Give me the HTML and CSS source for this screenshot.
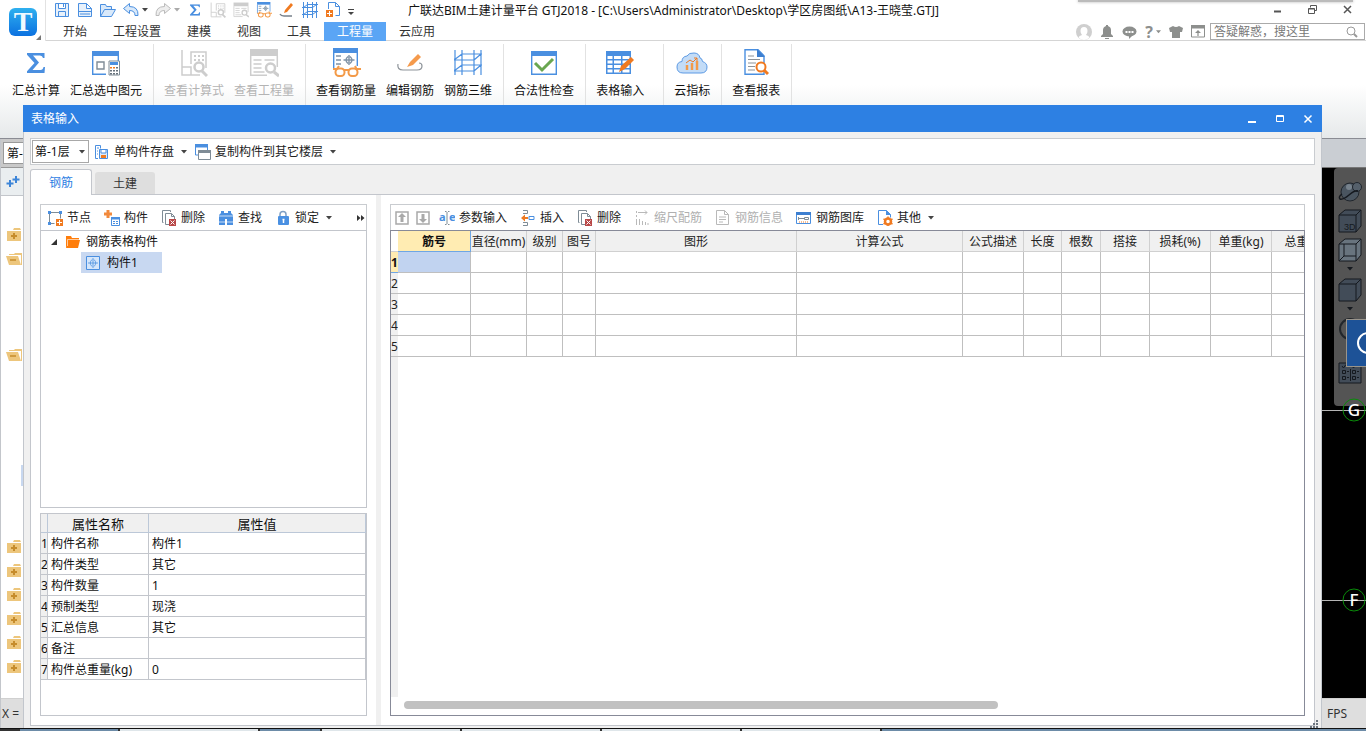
FILE: index.html
```html
<!DOCTYPE html>
<html lang="zh-CN">
<head>
<meta charset="utf-8">
<title>广联达BIM土建计量平台 GTJ2018</title>
<link rel="stylesheet" href="styles.css">
</head>
<body>
<svg class="defs" aria-hidden="true">
  <symbol id="caret" viewBox="0 0 6 4"><path d="M0 0h6L3 3.5z" fill="currentColor"/></symbol>
  <symbol id="sigma" viewBox="0 0 18 20"><path d="M0 0h17.500v5h-1.500q-.5-2.500-3-2.500H6l6 7-6.500 7.500H13.500q2.500 0 3-3H18l-.5 6H0v-1.800L7.500 10 0 1.800z" fill="#4a8fe0"/></symbol>
  <symbol id="calcexpr" viewBox="0 0 28 28"><g fill="none" stroke="#cdcdcd" stroke-width="1.500"><path d="M2 1v25h9V18H2M11 26h9M11 15V3h15v16"/><circle cx="19" cy="18" r="4.500" stroke-width="2.500"/><path d="M22 22l5 5" stroke-width="3"/></g><path d="M14 6h2v2h-2zM18 6h2v2h-2zM22 6h2v2h-2zM14 10h2v2h-2zM18 10h2v2h-2zM22 10h2v2h-2z" fill="#cdcdcd"/></symbol>
  <symbol id="calcqty" viewBox="0 0 30 28"><path d="M1 0h28v7H1z" fill="#cdcdcd"/><path d="M1.700 7v19.300H18M28.300 7v11M4.500 11h8M15.500 11h10M4.500 15h8M4.500 19h8M4.500 23h11" fill="none" stroke="#cdcdcd" stroke-width="1.500"/><circle cx="21.500" cy="19" r="4.500" fill="#fff" stroke="#cdcdcd" stroke-width="2.500"/><path d="M25 23l5 4" stroke="#cdcdcd" stroke-width="3"/></symbol>
  <symbol id="rebarqty" viewBox="0 0 30 30"><path d="M2 0h25v5H2z" fill="#4a8fe0"/><path d="M2.700 5v16M26.300 5v13" stroke="#4a8fe0" stroke-width="1.400"/><g fill="none" stroke="#8093a6" stroke-width="1.400"><path d="M5 8h5M5 12h5M5 16h5M18 7v10M12.500 12h11M17 8.500q-4 3.500 0 7M19 8.500q4 3.500 0 7"/></g><g fill="none" stroke="#f39a48" stroke-width="2"><rect x="4.500" y="20.500" width="9" height="7.500" rx="3.500"/><rect x="17.500" y="20.500" width="9" height="7.500" rx="3.500"/><path d="M13 22h5M5 22l3-4M26 22l-2-4M2 21h3M26 21h4"/></g></symbol>
  <symbol id="pencil" viewBox="0 0 26 26"><path d="M21 4l3 3-8 8-6 2 3-5z" fill="#f59a4c"/><path d="M1 14q-1 6 5 6h14q5 0 5-4 0-3-3-3" fill="none" stroke="#8d9399" stroke-width="1.200"/></symbol>
  <symbol id="rebar3d" viewBox="0 0 28 26"><g fill="none" stroke="#4a8fe0" stroke-width="1.200"><path d="M1 0v25M8 0v25M20 0v25M27 0v25M0 10h20M0 21h20M8 4h20M8 15h20M0 10l8-6M20 10l7-6M0 21l8-6M20 21l7-6"/></g></symbol>
  <symbol id="save" viewBox="0 0 16 16"><path d="M1.500 1.500h13v13h-13z M4.500 1.500v5h7v-5 M4.500 14.500V9.500h7v5M9.500 2v3" fill="#e8f1fb" stroke="#4a8fe0"/></symbol>
  <symbol id="delete" viewBox="0 0 16 16"><path d="M2.500 12.500h-1V.5h8v1.500M4.500 3.500h6l3 3v8h-9z" fill="#fff" stroke="#7f8c96"/><path d="M10.500 3.500v3h3" fill="none" stroke="#7f8c96"/><path d="M8 9h7v7H8z" fill="#b94848"/><path d="M9.500 10.500l4 4m0-4l-4 4" stroke="#fff"/></symbol>
  <symbol id="fplus" viewBox="0 0 16 14"><path d="M1 3h14v10H1zM8 0h6l1 2H7z" fill="#edc67c"/><path d="M8 5v6M5 8h6" stroke="#c68c2c" stroke-width="2"/></symbol>
  <symbol id="fopen" viewBox="0 0 16 14"><path d="M3 3V2h5l1-1h7v12h-1V3z" fill="#edc67c"/><path d="M0 4h12l3 9H3z" fill="#edc67c"/><path d="M4 8h6" stroke="#c68c2c" stroke-width="1.500"/></symbol>
  <symbol id="cube" viewBox="0 0 24 24"><path d="M1 6l6-5h16v16l-5 6H1z" fill="#424c58" stroke="#15191f"/><path d="M1 6h17v17M18 6l5-5" fill="none" stroke="#15191f"/></symbol>
</svg>

<div class="app">
  <header class="top">
    <div class="logo">
      <svg width="28" height="28" viewBox="0 0 28 28"><defs><linearGradient id="lg" x1="0" y1="0" x2="0" y2="1"><stop offset="0" stop-color="#2fb0ef"/><stop offset="1" stop-color="#0b71e0"/></linearGradient></defs><rect width="28" height="28" rx="6" fill="url(#lg)"/><text x="14" y="23" class="logo-t">T</text></svg>
      <svg class="logo-corner" width="5" height="5"><path d="M5 0v5H0z" fill="#777"/></svg>
    </div>
    <div class="top-main">
      <div class="titlebar">
        <div class="quick">
          <svg width="16" height="16"><use href="#save"/></svg>
          <svg width="16" height="16" viewBox="0 0 16 16"><path d="M1.500 14.500v-13h8l5 5v8zM9.500 1.500v5h5" fill="#e8f1fb" stroke="#4a8fe0"/><path d="M1 9.500h14M3 12h10" stroke="#4a8fe0"/></svg>
          <svg width="16" height="16" viewBox="0 0 16 16"><path d="M.5 14.500v-12h5l1 2h5v3M.5 14.500l4-7h11l-4 7z" fill="#d9e9fa" stroke="#4a8fe0"/></svg>
          <span class="pair"><svg width="16" height="16" viewBox="0 0 16 16"><path d="M.5 6.500l6-5v3q9 0 8.500 9h-3q0-5-5.500-5v3z" fill="#d9e9fa" stroke="#4a8fe0"/></svg><svg class="car" width="6" height="4"><use href="#caret"/></svg></span>
          <span class="pair off"><svg width="16" height="16" viewBox="0 0 16 16"><path d="M15.500 6.500l-6-5v3q-9 0-8.500 9h3q0-5 5.500-5v3z" fill="#eee" stroke="#bbb"/></svg><svg class="car" width="6" height="4"><use href="#caret"/></svg></span>
          <svg width="16" height="16" viewBox="-4 -4 26 28"><use href="#sigma" width="18" height="20"/></svg>
          <svg width="16" height="16"><use href="#calcexpr"/></svg>
          <svg width="16" height="16"><use href="#calcqty"/></svg>
          <svg width="16" height="16"><use href="#rebarqty"/></svg>
          <svg width="16" height="16" viewBox="0 0 16 16"><path d="M12 1l2 2-6 7-3 1 1-3z" fill="#f07a20"/><path d="M1 12q1 2 4 2h8" fill="none" stroke="#77808a" stroke-width="1.500"/></svg>
          <svg width="16" height="16" viewBox="0 0 16 16"><path d="M1.500 0v16M5.500 0v16M10.500 0v16M14.500 0v16M0 5.500h11M0 12.500h11M5 2.500h11M5 9.500h11M1.500 5.500l4-3M10.500 5.500l4-3M1.500 12.500l4-3M10.500 12.500l4-3" fill="none" stroke="#4a8fe0"/></svg>
          <svg width="16" height="16" viewBox="0 0 16 16"><path d="M3.500 7V.5h7l4 4v9h-4M10.500.5v4h4" fill="none" stroke="#4a8fe0"/><path d="M1 8h7v7H1z" fill="#f07a20"/><path d="M4.500 9v5M2 11.500h5" stroke="#fff"/></svg>
          <svg width="6" height="16" viewBox="0 0 6 16"><path d="M0 7.500h6" stroke="#444"/><path d="M0 10h6l-3 3z" fill="#444"/></svg>
        </div>
        <div class="title">广联达BIM土建计量平台 GTJ2018 - [C:\Users\Administrator\Desktop\学区房图纸\A13-王晓莹.GTJ]</div>
        <div class="winbtns">
          <button aria-label="最小化"><svg width="9" height="9"><path d="M1 6.500h7" stroke="#555" stroke-width="2"/></svg></button>
          <button aria-label="还原"><svg width="9" height="9"><path d="M2.500 2.500v-2h6v5h-2M.5 3.500h6v5h-6zM.5 4h6" fill="none" stroke="#555"/></svg></button>
          <button aria-label="关闭"><svg width="9" height="9"><path d="M1 1l7 7M8 1l-7 7" stroke="#555" stroke-width="1.500"/></svg></button>
        </div>
      </div>
      <div class="tabrow">
        <nav class="tabs">
          <a href="#">开始</a><a href="#">工程设置</a><a href="#">建模</a><a href="#">视图</a><a href="#">工具</a><a href="#" class="on">工程量</a><a href="#">云应用</a>
        </nav>
        <div class="help">
          <svg width="16" height="16" viewBox="0 0 16 16"><circle cx="8" cy="8" r="8" fill="#cfcfcf"/><path d="M8 3q3.500 0 3.500 4 0 2.500-1.500 4 3 .5 3.500 2.500Q11 16 8 16t-5.500-2.500Q3 11.500 6 11 4.500 9.500 4.500 7 4.500 3 8 3z" fill="#fff"/></svg>
          <svg width="14" height="16" viewBox="0 0 14 16"><path d="M6 1h2v1q3 1 3 4v4l2 2v1H1v-1l2-2V6q0-3 3-4zM5 14h4v1H5z" fill="#8d8f8d"/></svg>
          <svg width="15" height="14" viewBox="0 0 15 14"><ellipse cx="7.500" cy="6.500" rx="7" ry="5" fill="#8d8f8d"/><path d="M7 11v3l4-4z" fill="#8d8f8d"/><path d="M3.500 6h2v2h-2zM6.500 6h2v2h-2zM9.500 6h2v2h-2z" fill="#fff"/></svg>
          <span class="q">?<svg width="5" height="4"><use href="#caret"/></svg></span>
          <svg width="14" height="14" viewBox="0 0 14 14"><path d="M4 1q3 2 6 0l4 2-1 4h-2v6H3V7H1L0 3z" fill="#8d8f8d"/></svg>
          <svg width="14" height="13" viewBox="0 0 14 13"><path d="M.5 1h13v11H.5z" fill="#fff" stroke="#8d8f8d"/><path d="M0 0h14v3.500H0zM7 5l3 3H7.600v3H6.400V8H4z" fill="#8d8f8d"/></svg>
          <label class="search"><input type="text" placeholder="答疑解惑，搜这里" aria-label="搜索"><svg width="12" height="12"><circle cx="5" cy="5" r="4" fill="none" stroke="#999"/><path d="M8 8l3 3" stroke="#999" stroke-width="2"/></svg></label>
        </div>
      </div>
    </div>
    <div class="topshadow"></div>
  </header>

  <div class="ribbon">
    <div class="group first">
      <button><svg width="28" height="30" viewBox="-5 -5 28 30"><use href="#sigma" width="18" height="20"/></svg>汇总计算</button>
      <button><svg width="28" height="30" viewBox="0 0 28 30"><path d="M0 3h27v5H0z" fill="#4a8fe0"/><path d="M.7 8v18.300H14M26.300 8v5" fill="none" stroke="#4a8fe0" stroke-width="1.400"/><path d="M5 14h7v7H5z" fill="none" stroke="#7f8c96" stroke-width="1.400"/><path d="M17 13h10.500v14H17z" fill="#fff" stroke="#7f8c96"/><path d="M18 14h8v3h-8z" fill="#4a8fe0"/><path d="M18 19h2v1.500h-2zM21 19h2v1.500h-2z" fill="#f07a20"/><path d="M24 19h2v1.500h-2zM18 22h2v1.500h-2zM21 22h2v1.500h-2zM24 22h2v1.500h-2zM18 25h2v1.500h-2zM21 25h2v1.500h-2zM24 25h2v1.500h-2z" fill="#66717b"/></svg>汇总选中图元</button>
    </div>
    <div class="group">
      <button disabled><svg width="28" height="30"><use href="#calcexpr"/></svg>查看计算式</button>
      <button disabled><svg width="30" height="30"><use href="#calcqty"/></svg>查看工程量</button>
    </div>
    <div class="group">
      <button><svg width="30" height="30"><use href="#rebarqty"/></svg>查看钢筋量</button>
      <button><svg width="26" height="30"><use href="#pencil"/></svg>编辑钢筋</button>
      <button><svg width="28" height="30"><use href="#rebar3d"/></svg>钢筋三维</button>
    </div>
    <div class="group">
      <button><svg width="26" height="30" viewBox="0 0 26 30"><path d="M.7 4.700h24.600v21.600H.7z" fill="#fff" stroke="#4a8fe0" stroke-width="1.400"/><path d="M0 3h26v5H0z" fill="#4a8fe0"/><path d="M4 15l7 7 11-11" fill="none" stroke="#69a650" stroke-width="3"/></svg>合法性检查</button>
    </div>
    <div class="group wide">
      <button><svg width="28" height="30" viewBox="0 0 28 30"><path d="M0 3h25v23H0z" fill="#4a8fe0"/><path d="M1.500 8h5v3h-5zM8 8h7v3H8zM16.500 8h7v3h-7zM1.500 12.500h5v3h-5zM8 12.500h7v3H8zM16.500 12.500h7v3h-7zM1.500 17h5v3h-5zM8 17h7v3H8zM16.500 17h7v3h-7zM1.500 21.500h5v3h-5zM8 21.500h7v3H8zM16.500 21.500h7v3h-7z" fill="#fff"/><path d="M25 9l3 3-9 9-6 3 2-6z" fill="#f07a20"/></svg>表格输入</button>
    </div>
    <div class="group">
      <button><svg width="32" height="30" viewBox="0 0 32 30"><path d="M7 25q-6 0-6-6 0-5 5-5.500 0-5 5-5.500 2-3.500 7-3 5 0 6 5 2 0 2.500 3.500Q31 15 31 19q0 6-6 6z" fill="#c3dcf7" stroke="#5c9ae4"/><path d="M11 22v-5M16 22v-7M21 22v-9" stroke="#f39a48" stroke-width="2.500"/><path d="M10 15l4-3 3 2 4-4M18 10h3v3" fill="none" stroke="#f07a20"/></svg>云指标</button>
    </div>
    <div class="group">
      <button><svg width="26" height="30" viewBox="0 0 26 30"><path d="M2 1.700h13l6 6v18.600H2z" fill="#fff" stroke="#4a8fe0" stroke-width="1.400"/><path d="M14 1v8h8z" fill="#3d7fd0"/><path d="M5 8h6M5 11.500h12M5 15h8M5 18.500h7M5 22h7" stroke="#8d9399"/><circle cx="18" cy="19" r="4.500" fill="#fff" stroke="#f07a20" stroke-width="2"/><path d="M21 22l4 4" stroke="#f07a20" stroke-width="3"/></svg>查看报表</button>
    </div>
  </div>

  <main class="work">
    <aside class="strip">
      <div class="strip-floor"><span>第-</span></div>
      <div class="strip-tool"><svg width="14" height="12"><path d="M4 4v7M.5 7.500h7M10 0v7M6.500 3.500h7" stroke="#3d85d8" stroke-width="2"/></svg></div>
      <div class="strip-tree">
        <svg class="r1"><use href="#fplus"/></svg><svg class="r2"><use href="#fopen"/></svg><svg class="r6"><use href="#fopen"/></svg><i class="r11"></i>
        <svg class="r14"><use href="#fplus"/></svg><svg class="r15"><use href="#fplus"/></svg><svg class="r16"><use href="#fplus"/></svg><svg class="r17"><use href="#fplus"/></svg><svg class="r18"><use href="#fplus"/></svg><svg class="r19"><use href="#fplus"/></svg>
      </div>
      <div class="status">X =</div>
    </aside>
    <section class="view">
      <div class="view-top"></div>
      <div class="canvas">
        <div class="viewtools">
          <svg width="24" height="24" viewBox="0 0 24 24"><circle cx="12" cy="12" r="9" fill="#4a5560" stroke="#20262d"/><circle cx="19" cy="7" r="4.500" fill="#55606b" stroke="#20262d"/><path d="M4 14q-4 3-2 5 3 1 9-4t9-4" fill="none" stroke="#15191f" stroke-width="1.500"/><circle cx="11" cy="7" r="3" fill="#77828c"/></svg>
          <svg width="24" height="24" viewBox="0 0 24 24"><use href="#cube"/><text x="6" y="21" class="t3d">3D</text></svg>
          <svg width="24" height="24" viewBox="0 0 24 24"><path d="M1 6l6-5h16v16l-5 6H1z" fill="#68747e" stroke="#15191f"/><path d="M1 6h17v17M18 6l5-5M6 6v12h12M6 18l-5 5" fill="none" stroke="#15191f"/></svg>
          <svg class="vc" width="6" height="4"><use href="#caret"/></svg>
          <svg width="24" height="24"><use href="#cube"/></svg>
          <svg class="vc" width="6" height="4"><use href="#caret"/></svg>
          <svg width="24" height="22" viewBox="0 0 24 22"><circle cx="12" cy="11" r="10" fill="none" stroke="#22262b" stroke-width="2"/></svg>
          <svg class="vlist" width="24" height="24" viewBox="0 0 24 24"><path d="M1 2h22v20H1z" fill="#424c58" stroke="#15191f"/><path d="M4.500 9.500h3v3h-3zM4.500 15.500h3v3h-3zM14.500 9.500h3v3h-3zM14.500 15.500h3v3h-3zM9 10.500h2M9 16.500h2M19 10.500h2M19 16.500h2M12.500 8v12M4 5l1.500 2L8 3.500M14 5l1.500 2L18 3.500" fill="none" stroke="#15191f"/></svg>
        </div>
        <div class="axis g"><svg width="44" height="24" viewBox="0 0 44 24"><path d="M0 12.500h44" stroke="#b5b5b5"/><circle cx="32" cy="12" r="11" fill="none" stroke="#0a8a0a"/><text x="32" y="18">G</text></svg></div>
        <div class="axis f"><svg width="44" height="24" viewBox="0 0 44 24"><path d="M0 12.500h44" stroke="#b5b5b5"/><circle cx="32" cy="12" r="11" fill="none" stroke="#0a8a0a"/><text x="32" y="18">F</text></svg></div>
        <div class="floatball"><svg width="19" height="46"><circle cx="21" cy="23" r="10" fill="none" stroke="#fff" stroke-width="2"/></svg></div>
      </div>
      <div class="status">FPS</div>
    </section>
  </main>
  <footer class="taskbar"><i class="dk"></i><i class="bl a"></i><i class="b"></i><i class="bl c"></i><i class="b"></i><i class="b"></i><i class="b"></i><i class="b"></i><i class="bl rest"></i></footer>

  <section class="dialog" role="dialog" aria-label="表格输入">
    <div class="dlg-title"><span>表格输入</span>
      <button aria-label="最小化"><svg width="10" height="10"><path d="M1 8h8" stroke="#fff" stroke-width="2"/></svg></button>
      <button aria-label="最大化"><svg width="10" height="10"><path d="M1.500 1.500h7v6h-7zM1 2.500h8" fill="none" stroke="#fff"/></svg></button>
      <button aria-label="关闭"><svg width="10" height="10"><path d="M1.500 1.500l7 7M8.500 1.500l-7 7" stroke="#fff" stroke-width="1.500"/></svg></button>
    </div>
    <div class="dlg-body">
      <div class="dlg-tools">
        <div class="combo"><select aria-label="楼层"><option>第-1层</option></select><svg width="6" height="4"><use href="#caret"/></svg></div>
        <button class="tb"><svg width="16" height="16" viewBox="0 0 16 16"><path d="M4 14.500H1.500v-13h5v3" fill="#fff" stroke="#4a8fe0"/><path d="M3 4h2M3 7h1M3 10h1" stroke="#4a8fe0"/><path d="M5.500 5.500h8v9h-8z" fill="#dbe9fa" stroke="#4a8fe0"/><path d="M7 6v3h5V6" fill="#fff" stroke="#4a8fe0"/><path d="M7 11h5v3H7z" fill="#f07a20"/></svg>单构件存盘<svg class="car" width="6" height="4"><use href="#caret"/></svg></button>
        <button class="tb"><svg width="16" height="16" viewBox="0 0 16 16"><path d="M.5 1h12v10H.5z" fill="#fff" stroke="#4a8fe0"/><path d="M0 0h13v3.500H0z" fill="#4a8fe0"/><path d="M3.500 6.500h12v9h-12z" fill="#fff" stroke="#7f8c96"/><path d="M3 6h13v3H3z" fill="#7f8c96"/></svg>复制构件到其它楼层<svg class="car" width="6" height="4"><use href="#caret"/></svg></button>
      </div>
      <div class="dlg-tabs"><button class="on">钢筋</button><button>土建</button></div>
      <div class="panel">
        <div class="left">
          <div class="bar">
            <button class="tb"><svg width="16" height="16" viewBox="0 0 16 16"><path d="M2.500 13.500v-11h11v6M2.500 13.500h5" fill="none" stroke="#7f8c96"/><path d="M1 1h3v3H1zM12 1h3v3h-3zM1 12h3v3H1z" fill="#4a8fe0"/><path d="M9 9h7v7H9z" fill="#f07a20"/><path d="M12.500 10v5M10 12.500h5" stroke="#fff"/></svg>节点</button>
            <button class="tb"><svg width="16" height="16" viewBox="0 0 16 16"><path d="M2.500 0h3v2.500H8v3H5.500V8h-3V5.500H0v-3h2.500z" fill="#f28a3c"/><path d="M7.500 7.500h8v8h-8z" fill="#fff" stroke="#4a8fe0"/><path d="M7 7h9v2.500H7z" fill="#4a8fe0"/><path d="M9 11.500h2M12 11.500h2M9 13.500h2M12 13.500h2" stroke="#4a8fe0"/></svg>构件</button>
            <button class="tb"><svg width="16" height="16"><use href="#delete"/></svg>删除</button>
            <button class="tb"><svg width="16" height="16" viewBox="0 0 16 16"><path d="M3 1h3v2h4V1h3v2l2 2v10H9V9H7v6H1V5l2-2z" fill="#4a8fe0"/><path d="M1 6h14M1 12h6M9 12h6" stroke="#fff" stroke-width=".7"/></svg>查找</button>
            <button class="tb"><svg width="16" height="16" viewBox="0 0 16 16"><path d="M5 7V4.500q0-3 3-3t3 3V7" fill="none" stroke="#7f9fc4" stroke-width="1.500"/><rect x="3" y="6" width="11" height="9" rx="1" fill="#4a90e2"/><path d="M8.500 9v4M7.500 9.500h2" stroke="#fff" stroke-width="1.500"/></svg>锁定<svg class="car" width="6" height="4"><use href="#caret"/></svg></button>
            <button class="more" aria-label="更多"><svg width="8" height="6"><path d="M0 0l3.500 3L0 6zM4 0l3.500 3L4 6z" fill="#333"/></svg></button>
          </div>
          <div class="tree">
            <div class="node"><svg width="6" height="6"><path d="M6 0v6H0z" fill="#333"/></svg><svg class="fold" width="16" height="14" viewBox="0 0 16 14"><path d="M1 12V1h5l1 2h7v2" fill="#ff7d0a"/><path d="M3 5h12l-2 8H1z" fill="#ff7d0a"/><path d="M2.500 11V4.500H14" fill="none" stroke="#fff" stroke-width=".6"/></svg><span>钢筋表格构件</span></div>
            <div class="node sel"><svg width="14" height="14" viewBox="0 0 14 14"><path d="M.5.5h13v13H.5z" fill="#d5e6fb" stroke="#4a8fe0"/><path d="M7 2v10M2 7h10M6 3.500Q2.500 7 6 10.500M8 3.500Q11.500 7 8 10.500" fill="none" stroke="#4a8fe0" stroke-width=".8"/></svg><span>构件1</span></div>
          </div>
          <div class="props">
            <table>
              <thead><tr><th class="n"></th><th class="k">属性名称</th><th>属性值</th></tr></thead>
              <tbody>
                <tr><th class="n">1</th><td>构件名称</td><td>构件1</td></tr>
                <tr><th class="n">2</th><td>构件类型</td><td>其它</td></tr>
                <tr><th class="n">3</th><td>构件数量</td><td>1</td></tr>
                <tr><th class="n">4</th><td>预制类型</td><td>现浇</td></tr>
                <tr><th class="n">5</th><td>汇总信息</td><td>其它</td></tr>
                <tr><th class="n">6</th><td>备注</td><td></td></tr>
                <tr><th class="n">7</th><td>构件总重量(kg)</td><td>0</td></tr>
              </tbody>
            </table>
          </div>
        </div>
        <div class="split"></div>
        <div class="right">
          <div class="bar">
            <button class="tb ic" disabled aria-label="上移"><svg width="14" height="14" viewBox="0 0 14 14"><path d="M1 1h12v12H1z" fill="#fff" stroke="#a9a9a9" stroke-width="1.500"/><path d="M7 2l4 4H8.500v5h-3V6H3z" fill="#a9a9a9"/></svg></button>
            <button class="tb ic" disabled aria-label="下移"><svg width="14" height="14" viewBox="0 0 14 14"><path d="M1 1h12v12H1z" fill="#fff" stroke="#a9a9a9" stroke-width="1.500"/><path d="M7 12l4-4H8.500V3h-3v5H3z" fill="#a9a9a9"/></svg></button>
            <button class="tb"><svg width="16" height="16" viewBox="0 0 16 16"><text x="0" y="11" class="abe">a</text><text x="10" y="11" class="abe">e</text><path d="M6 1.500h1.500M9 1.500h1.500M8 2v12M6 14.500h1.500M9 14.500h1.500" stroke="#7f8c96"/></svg>参数输入</button>
            <button class="tb"><svg width="16" height="16" viewBox="0 0 16 16"><path d="M3 .5h4.500v3H3M3 12.500h4.500v3H3" fill="none" stroke="#7f8c96"/><path d="M1 8l4-3.500V7h3v2H5v2.500z" fill="#f07a20"/><path d="M9 6.500h5v3H9z" fill="none" stroke="#4a8fe0"/></svg>插入</button>
            <button class="tb"><svg width="16" height="16"><use href="#delete"/></svg>删除</button>
            <button class="tb" disabled><svg width="16" height="16" viewBox="0 0 16 16"><path d="M2.500 1v2M2.500 5v2M2.500 9v6M5.500 9v6M8.500 11v4M11.500 12v3M14 13v2M4 2.500h9M11 .5l2 2-2 2" fill="none" stroke="#b9b9b9"/></svg>缩尺配筋</button>
            <button class="tb" disabled><svg width="16" height="16" viewBox="0 0 16 16"><path d="M1.500.5h8l4 4v10h-12zM9.500.5v4h4M4 7h7M4 9.500h7M4 12h4" fill="none" stroke="#b9b9b9"/></svg>钢筋信息</button>
            <button class="tb"><svg width="16" height="16" viewBox="0 0 16 16"><path d="M.5 2.500h14v11H.5z" fill="#fff" stroke="#4a8fe0"/><path d="M0 2h15v3H0z" fill="#3d7fd0"/><path d="M2.500 7v3M2.500 8.500H8M8.500 7.500h4v2h-4z" fill="none" stroke="#7f8c96"/><path d="M3 12h10" stroke="#f07a20" stroke-dasharray="1 1"/></svg>钢筋图库</button>
            <button class="tb"><svg width="16" height="16" viewBox="0 0 16 16"><path d="M6 14.500H1.500V.5h8l4 4v3" fill="#fff" stroke="#4a8fe0"/><path d="M9 0v5h5z" fill="#4a8fe0"/><circle cx="11" cy="11.500" r="3" fill="#fff" stroke="#f07a20" stroke-width="2.500"/><path d="M11 6.500v2M11 14.500v1.500M6.500 9l2 1M13.500 13l2 1M6.500 14l2-1M13.500 10l2-1" stroke="#f07a20" stroke-width="1.500"/></svg>其他<svg class="car" width="6" height="4"><use href="#caret"/></svg></button>
          </div>
          <div class="grid">
            <div class="grid-main">
              <table>
                <colgroup><col class="w7"><col class="w73"><col class="w56"><col class="w36"><col class="w33"><col class="w201"><col class="w166"><col class="w61"><col class="w38"><col class="w39"><col class="w49"><col class="w61"><col class="w61"><col class="w71"></colgroup>
                <thead><tr><th class="corner"></th><th class="cur">筋号</th><th>直径(mm)</th><th>级别</th><th>图号</th><th>图形</th><th>计算公式</th><th>公式描述</th><th>长度</th><th>根数</th><th>搭接</th><th>损耗(%)</th><th>单重(kg)</th><th>总重(kg)</th></tr></thead>
                <tbody>
                  <tr><th class="n cur">1</th><td class="cell"></td><td></td><td></td><td></td><td></td><td></td><td></td><td></td><td></td><td></td><td></td><td></td><td></td></tr>
                  <tr><th class="n">2</th><td></td><td></td><td></td><td></td><td></td><td></td><td></td><td></td><td></td><td></td><td></td><td></td><td></td></tr>
                  <tr><th class="n">3</th><td></td><td></td><td></td><td></td><td></td><td></td><td></td><td></td><td></td><td></td><td></td><td></td><td></td></tr>
                  <tr><th class="n">4</th><td></td><td></td><td></td><td></td><td></td><td></td><td></td><td></td><td></td><td></td><td></td><td></td><td></td></tr>
                  <tr><th class="n">5</th><td></td><td></td><td></td><td></td><td></td><td></td><td></td><td></td><td></td><td></td><td></td><td></td><td></td></tr>
                </tbody>
              </table>
            </div>
            <div class="hscroll"><i></i></div>
          </div>
        </div>
      </div>
    </div>
    <svg class="grip" width="8" height="8"><path d="M6 0h2v2H6zM3 3h2v2H3zM6 3h2v2H6zM0 6h2v2H0zM3 6h2v2H3zM6 6h2v2H6z" fill="#6d7680"/></svg>
  </section>
</div>
</body>
</html>
```
FILE: styles.css
```css
* { box-sizing: border-box; }
html, body { height: 100%; margin: 0; }
body, button, input, select, table {
  font-family: "Noto Sans", "Noto Sans CJK SC", sans-serif;
  font-size: 12px;
  line-height: 16px;
}
body { color: #222; overflow: hidden; background: #fff; }
svg { display: block; flex: none; }
button { border: 0; background: none; padding: 0; color: inherit; white-space: nowrap; }
a { color: inherit; text-decoration: none; }
.defs { position: absolute; width: 0; height: 0; }
.app { position: relative; height: 100vh; display: flex; flex-direction: column; }

/* title bar and main tabs */
.top { position: relative; display: flex; height: 41px; flex: none; }
.logo { width: 46px; padding: 8px 0 0 9px; border-right: 1px solid #e2e2e2; position: relative; }
.logo-t { font: bold 28px "Liberation Serif", serif; fill: #f0f9ff; text-anchor: middle; }
.logo-corner { position: absolute; right: 4px; bottom: 1px; }
.top-main { flex: 1; min-width: 0; border-bottom: 1px solid #d5d5d5; }
.titlebar { display: flex; align-items: flex-start; height: 22px; padding: 2px 14px 0 8px; }
.quick { display: flex; gap: 7px; color: #444; }
.pair { display: flex; align-items: center; gap: 3px; }
.pair.off { color: #aaa; }
.title { flex: 1; padding-left: 54px; line-height: 18px; color: #111; white-space: nowrap; }
.winbtns { display: flex; gap: 26px; padding-top: 3px; }
.tabrow { display: flex; justify-content: space-between; height: 19px; padding-left: 4px; }
.tabs { display: flex; }
.tabs a { padding: 0 13px; line-height: 20px; white-space: nowrap; color: #333; }
.tabs a.on { background: #5aa5f5; color: #fff; }
.help { display: flex; align-items: center; gap: 8px; color: #8d8f8d; }
.q { display: flex; align-items: center; gap: 3px; font-weight: 700; font-size: 16px; }
.search { display: flex; align-items: center; width: 155px; height: 17px; margin: 0 1px 0 -3px; padding: 0 6px 0 3px; border: 1px solid #aaa; background: #fff; }
.search input { flex: 1; min-width: 0; height: 14px; padding: 0; border: 0; outline: 0; background: none; line-height: 14px; }
.search input::placeholder { color: #777; }
.topshadow { position: absolute; top: 0; right: 13px; width: 275px; height: 2px; background: #bbb; box-shadow: 0 0 3px #aaa; }

/* ribbon */
.ribbon { display: flex; height: 98px; flex: none; padding-top: 3px; border-bottom: 1px solid #8a8c93; background: linear-gradient(#fff 0, #fff 45%, #e6e9ea 100%); }
.group { display: flex; height: 66px; padding: 0 6px 0 5px; border-right: 1px solid #e2e2e2; }
.group.first { padding-left: 7px; }
.group.wide { padding-right: 14px; }
.ribbon button { display: flex; flex-direction: column; align-items: center; gap: 5px; padding: 4px 5px 0; color: #111; }
.ribbon button:disabled { color: #b4b4b4; }

/* workspace */
.work { flex: 1; display: flex; justify-content: space-between; min-height: 0; }
.strip { width: 23px; display: flex; flex-direction: column; border-left: 1px solid #c3c6cb; }
.strip-floor { height: 28px; padding: 3px 0 0 2px; background: #c9c9c9; overflow: hidden; }
.strip-floor span { display: block; height: 22px; padding-left: 3px; line-height: 22px; border: 1px solid #999; border-right: 0; background: #fff; color: #111; white-space: nowrap; }
.strip-tool { height: 29px; padding: 8px 0 0 5px; background: #eaeef0; border-bottom: 1px solid #c3c6cb; border-top: 1px solid #999; }
.strip-tree { flex: 1; display: grid; grid-auto-rows: 24px; align-items: center; padding: 27px 0 0 5px; background: #fff; overflow: hidden; }
.strip-tree svg { width: 16px; height: 14px; }
.r1 { grid-row: 1; }
.r2 { grid-row: 2; }
.r6 { grid-row: 6; }
.r11 { grid-row: 11; width: 2px; height: 21px; background: #c8d8f0; justify-self: end; }
.r14 { grid-row: 14; }
.r15 { grid-row: 15; }
.r16 { grid-row: 16; }
.r17 { grid-row: 17; }
.r18 { grid-row: 18; }
.r19 { grid-row: 19; }
.status { flex: none; height: 30px; padding: 0 1px; line-height: 30px; background: #dedede; color: #333; white-space: pre; border-top: 1px solid #d0d0d0; }
.view { width: 44px; display: flex; flex-direction: column; }
.view .status { padding-left: 5px; }
.view-top { height: 29px; background: #caced3; border-bottom: 1px solid #777; }
.canvas { flex: 1; position: relative; background: #000; overflow: hidden; }
.viewtools { display: flex; flex-direction: column; align-items: center; gap: 5px; height: 238px; margin-left: 12px; padding-top: 12px; background: #545454; border-radius: 4px 0 0 4px; }
.vc { color: #15191f; margin-bottom: 2px; }
.vlist { margin-top: 16px; }
.t3d { font: 9px "Liberation Sans", sans-serif; fill: #15191f; }
.axis { position: absolute; left: 0; }
.axis.g { top: 230px; }
.axis.f { top: 420px; }
.axis text { font: 500 17px "Noto Sans", sans-serif; fill: #fff; text-anchor: middle; }
.floatball { position: absolute; top: 151px; right: 0; background: #1d5297; border: 1px solid #9a958c; border-right: 0; }

.taskbar { display: flex; height: 3px; flex: none; border-top: 1px solid #111; background: #333; gap: 2px; }
.taskbar .dk { width: 18px; background: #333; }
.taskbar .bl { background: #6d8ca8; }
.taskbar .a { width: 98px; }
.taskbar .b { width: 138px; background: #dfe6ea; }
.taskbar .c { width: 60px; }
.taskbar .rest { flex: 1; }

/* dialog window floating over the workspace */
.dialog { position: absolute; left: 23px; right: 44px; top: 105px; bottom: 3px; display: flex; flex-direction: column; background: #f0f0f0; border: 1px solid #c2c6cc; border-width: 0 1px; }
.dlg-title { display: flex; align-items: center; gap: 18px; height: 27px; flex: none; margin: 0 -1px; padding: 0 9px 0 8px; background: #2d80e3; color: #fff; }
.dlg-title span { flex: 1; }
.dlg-body { flex: 1; min-height: 0; display: flex; flex-direction: column; padding: 6px 6px 2px; }
.dlg-tools { display: flex; align-items: center; height: 27px; flex: none; padding-left: 1px; background: #fff; border: 1px solid #c9ccd0; }
.combo { position: relative; width: 57px; height: 23px; }
.combo select { appearance: none; width: 100%; height: 100%; padding: 0 2px; border: 1px solid #a8a8a8; border-radius: 0; background: #fff; color: #111; }
.combo svg { position: absolute; right: 4px; top: 10px; color: #444; pointer-events: none; }
.tb { display: flex; align-items: center; gap: 4px; height: 22px; padding: 0 7px 0 5px; border-radius: 3px; }
.tb .car { margin: 0 -4px 0 3px; color: #444; }
.tb:disabled { color: #b0b0b0; }
.tb.ic { padding: 0 3px; }
.dlg-tabs { display: flex; align-items: flex-end; height: 29px; flex: none; padding-top: 4px; }
.dlg-tabs button { width: 60px; height: 22px; margin: 0 0 0 3px; padding-top: 1px; background: #dedede; color: #333; border-radius: 3px 3px 0 0; }
.dlg-tabs button.on { position: relative; width: 62px; height: 26px; margin: 0 0 -1px; background: #fff; color: #2d80e3; border: 1px solid #c3c6cc; border-bottom: 0; }
.panel { flex: 1; min-height: 0; display: flex; background: #fff; border: 1px solid #c3c6cc; }
.left { width: 345px; flex: none; padding: 9px; display: flex; flex-direction: column; }
.split { width: 5px; flex: none; background: #f0f0f0; }
.right { flex: 1; min-width: 0; padding: 9px; display: flex; flex-direction: column; }
.bar { display: flex; align-items: center; gap: 1px; height: 26px; flex: none; padding-left: 1px; border: 1px solid #c9ccd0; border-bottom: 0; }
.more { margin-left: auto; padding-right: 1px; }
.tree { flex: 1; border: 1px solid #c3c6cc; }
.node { display: flex; align-items: center; height: 21px; padding-left: 10px; color: #111; }
.fold { margin: 0 5px 0 8px; }
.node.sel { width: 81px; margin-left: 40px; padding-left: 5px; gap: 7px; background: #c8d8f1; }
.props { height: 203px; flex: none; margin-top: 5px; border: 1px solid #c3c6cc; }
table { table-layout: fixed; border-collapse: separate; border-spacing: 0; }
th, td { padding: 1px 0 0; height: 21px; border-right: 1px solid #c3c6cc; border-bottom: 1px solid #c3c6cc; white-space: nowrap; overflow: hidden; }
th { background: #f0f0f0; font-weight: 400; }
.props table { width: 100%; color: #111; }
.props thead th { height: 19px; font-size: 13px; border-color: #bcc8d8; }
.props td { padding-left: 3px; }
.props .n { width: 7px; }
.props .k { width: 101px; }
.grid { flex: 1; min-height: 0; display: flex; flex-direction: column; border: 1px solid #878a98; overflow: hidden; }
.grid-main { flex: 1; min-height: 0; overflow: hidden; background: linear-gradient(#f0f0f0, #f0f0f0) left / 7px 100% no-repeat; }
.grid table { width: 952px; }
.grid th, .grid td { border-color: #bfbfbf; }
.grid thead th { height: 21px; border-color: #d0d0d0; }
.grid td { background: #fff; }
.grid .corner { background: #fff; border-right: 0; }
.grid .n { border-right: 0; }
.grid thead th.cur { background: #ffecb2; font-weight: 700; color: #111; border-color: #6ea6e4; }
.grid .n.cur { background: #ffecb2; font-weight: 700; color: #111; border-color: #6ea6e4; }
.grid td.cell { background: #c1d3f0; }
.abe { font: bold 11px "Noto Sans", sans-serif; fill: #4a8fe0; }
.hscroll { height: 18px; flex: none; padding: 4px 13px; background: #fff; }
.hscroll i { display: block; width: 67%; height: 8px; border-radius: 4px; background: #c1c1c1; }
.w7 { width: 7px; }
.w33 { width: 33px; }
.w36 { width: 36px; }
.w38 { width: 38px; }
.w39 { width: 39px; }
.w49 { width: 49px; }
.w56 { width: 56px; }
.w61 { width: 61px; }
.w71 { width: 71px; }
.w73 { width: 73px; }
.w166 { width: 166px; }
.w201 { width: 201px; }
.grip { position: absolute; right: 3px; bottom: 0; }
```
